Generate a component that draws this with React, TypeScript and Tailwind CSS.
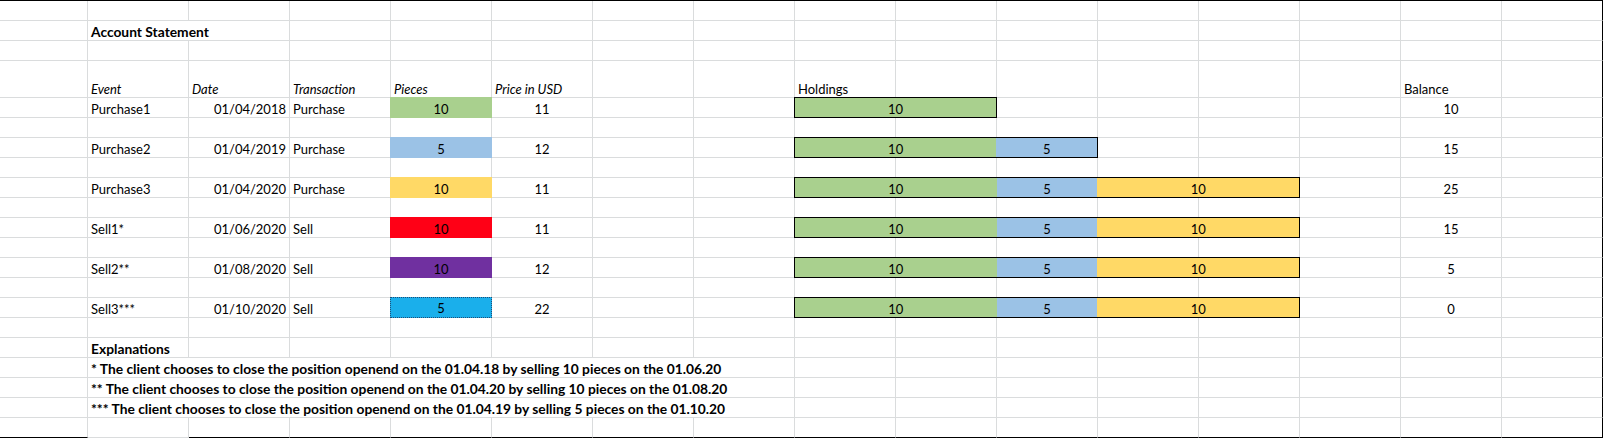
import React from 'react'

type Align = 'left' | 'right' | 'center'

interface Seg {
  span: number
  value: number
  color: string
}

interface CellDef {
  col: number
  span?: number
  text?: string
  align?: Align
  bold?: boolean
  italic?: boolean
  fill?: string
  dotted?: boolean
  bar?: Seg[]
}

const GREEN = 'bg-[#a9d08e]'
const BLUE = 'bg-[#9bc2e6]'
const YELLOW = 'bg-[#ffd966]'

const SPAN: Record<number, string> = {
  1: 'col-span-1',
  2: 'col-span-2',
  3: 'col-span-3',
  5: 'col-span-5',
  7: 'col-span-7',
}

const FLEX: Record<number, string> = {
  1: 'flex-[1]',
  2: 'flex-[2]',
}

const H1: Seg[] = [{ span: 2, value: 10, color: GREEN }]
const H2: Seg[] = [...H1, { span: 1, value: 5, color: BLUE }]
const H3: Seg[] = [...H2, { span: 2, value: 10, color: YELLOW }]

function txRow(
  event: string,
  date: string,
  tx: string,
  pieces: number,
  fill: string,
  price: number,
  holdings: Seg[],
  balance: number,
  dotted = false
): CellDef[] {
  return [
    { col: 1, text: event },
    { col: 2, text: date, align: 'right' },
    { col: 3, text: tx },
    { col: 4, text: String(pieces), align: 'center', fill, dotted },
    { col: 5, text: String(price), align: 'center' },
    { col: 8, span: holdings.reduce((n, s) => n + s.span, 0), bar: holdings },
    { col: 14, text: String(balance), align: 'center' },
  ]
}

const ROWS: CellDef[][] = [
  [],
  [{ col: 1, span: 2, text: 'Account Statement', bold: true }],
  [],
  [
    { col: 1, text: 'Event', italic: true },
    { col: 2, text: 'Date', italic: true },
    { col: 3, text: 'Transaction', italic: true },
    { col: 4, text: 'Pieces', italic: true },
    { col: 5, text: 'Price in USD', italic: true },
    { col: 8, text: 'Holdings' },
    { col: 14, text: 'Balance' },
  ],
  txRow('Purchase1', '01/04/2018', 'Purchase', 10, GREEN, 11, H1, 10),
  [],
  txRow('Purchase2', '01/04/2019', 'Purchase', 5, BLUE, 12, H2, 15),
  [],
  txRow('Purchase3', '01/04/2020', 'Purchase', 10, YELLOW, 11, H3, 25),
  [],
  txRow('Sell1*', '01/06/2020', 'Sell', 10, 'bg-[#ff0016]', 11, H3, 15),
  [],
  txRow('Sell2**', '01/08/2020', 'Sell', 10, 'bg-[#7030a0]', 12, H3, 5),
  [],
  txRow('Sell3***', '01/10/2020', 'Sell', 5, 'bg-[#1aafeb]', 22, H3, 0, true),
  [],
  [{ col: 1, text: 'Explanations', bold: true }],
  [
    {
      col: 1,
      span: 7,
      bold: true,
      text: '* The client chooses to close the position openend on the 01.04.18 by selling 10 pieces on the 01.06.20',
    },
  ],
  [
    {
      col: 1,
      span: 7,
      bold: true,
      text: '** The client chooses to close the position openend on the 01.04.20 by selling 10 pieces on the 01.08.20',
    },
  ],
  [
    {
      col: 1,
      span: 7,
      bold: true,
      text: '*** The client chooses to close the position openend on the 01.04.19 by selling 5 pieces on the 01.10.20',
    },
  ],
  [],
]

const LAST_COL = 15
const LAST_ROW = ROWS.length - 1

function cn(...parts: (string | false | undefined)[]) {
  return parts.filter(Boolean).join(' ')
}

function Cell({ def, row }: { def: CellDef; row: number }) {
  const span = def.span ?? 1
  const align = def.align ?? 'left'
  const endCol = def.col + span - 1

  const borders = cn(
    'border-r border-b',
    endCol === LAST_COL ? 'border-r-black' : 'border-r-[#dadcdd]',
    row === LAST_ROW && def.col !== 1 ? 'border-b-black' : 'border-b-[#dadcdd]'
  )

  const justify =
    align === 'right' ? 'justify-end pr-[3px]' : align === 'center' ? 'justify-center' : 'justify-start pl-[3px]'

  // filled cells cover the gridlines around them, like Excel does
  if (def.fill) {
    return (
      <div className={cn(SPAN[span], borders, 'min-w-0')}>
        <div
          className={cn(
            '-mt-px -ml-px h-[calc(100%+2px)] w-[calc(100%+2px)] flex items-end justify-center pb-px',
            def.fill,
            def.dotted && 'border border-dotted border-[#1f4e79]'
          )}
        >
          {def.text}
        </div>
      </div>
    )
  }

  if (def.bar) {
    return (
      <div className={cn(SPAN[span], borders, 'min-w-0')}>
        <div className="-mt-px -ml-px h-[calc(100%+2px)] w-[calc(100%+2px)] flex border border-black">
          {def.bar.map((s, i) => (
            <div key={i} className={cn(FLEX[s.span], s.color, 'flex items-end justify-center')}>
              {s.value}
            </div>
          ))}
        </div>
      </div>
    )
  }

  return (
    <div
      className={cn(
        SPAN[span],
        borders,
        justify,
        'min-w-0 flex items-end whitespace-nowrap',
        def.bold && 'font-bold text-[13.8px]',
        def.italic && 'italic'
      )}
    >
      {def.text}
    </div>
  )
}

function SheetRow({ defs, row }: { defs: CellDef[]; row: number }) {
  const cells: React.ReactNode[] = []
  let col = 0
  while (col <= LAST_COL) {
    const def = defs.find((d) => d.col === col) ?? { col }
    cells.push(<Cell key={col} def={def} row={row} />)
    col += def.span ?? 1
  }
  return <>{cells}</>
}

export default function App() {
  return (
    <div className="w-[1604px] h-[438px] bg-white overflow-hidden font-['Lato',sans-serif] text-[13px] leading-4 text-black">
      <div className="grid grid-cols-[88px_repeat(15,101px)] grid-rows-[20px_20px_20px_37px_repeat(17,20px)] border-t border-black w-[1603px]">
        {ROWS.map((defs, r) => (
          <SheetRow key={r} defs={defs} row={r} />
        ))}
      </div>
    </div>
  )
}
